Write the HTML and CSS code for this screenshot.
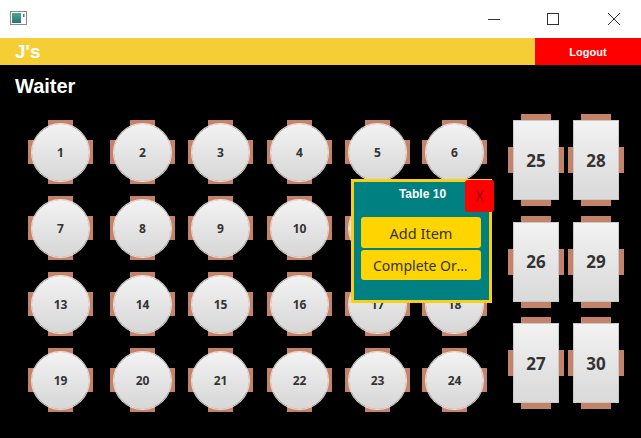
FILE: index.html
```html
<!DOCTYPE html>
<html lang="en">
<head>
<meta charset="utf-8">
<title>J's - Waiter</title>
<link rel="stylesheet" href="styles.css">
</head>
<body>
<div class="window">
  <div class="titlebar">
    <svg class="app-icon" width="17" height="14" viewBox="0 0 17 14">
      <defs>
        <linearGradient id="ig" x1="0" y1="0" x2="0" y2="1">
          <stop offset="0" stop-color="#4aa88f"/>
          <stop offset="1" stop-color="#2c6f7a"/>
        </linearGradient>
      </defs>
      <rect x="0.5" y="0.5" width="16" height="13" fill="#fff" stroke="#8a8a8a"/>
      <rect x="2" y="2" width="9" height="10" fill="url(#ig)"/>
      <rect x="13" y="3" width="1.5" height="3" fill="#6a6a6a"/>
    </svg>
    <div class="controls">
      <span class="ctl"><svg width="14" height="14" viewBox="0 0 14 14"><path d="M1 7.5h12" stroke="#333" stroke-width="1"/></svg></span>
      <span class="ctl"><svg width="14" height="14" viewBox="0 0 14 14"><rect x="1.5" y="1.5" width="11" height="11" fill="none" stroke="#333" stroke-width="1"/></svg></span>
      <span class="ctl"><svg width="14" height="14" viewBox="0 0 14 14"><path d="M1 1l12 12M13 1L1 13" stroke="#333" stroke-width="1"/></svg></span>
    </div>
  </div>

  <header class="appbar">
    <div class="brand">J's</div>
    <button class="logout">Logout</button>
  </header>

  <main class="floor">
    <h1 class="role">Waiter</h1>
    <div class="layout">
      <div class="round-grid">
        <div class="rtable"><div class="top">1</div></div>
        <div class="rtable"><div class="top">2</div></div>
        <div class="rtable"><div class="top">3</div></div>
        <div class="rtable"><div class="top">4</div></div>
        <div class="rtable"><div class="top">5</div></div>
        <div class="rtable"><div class="top">6</div></div>
        <div class="rtable"><div class="top">7</div></div>
        <div class="rtable"><div class="top">8</div></div>
        <div class="rtable"><div class="top">9</div></div>
        <div class="rtable"><div class="top">10</div></div>
        <div class="rtable"><div class="top">11</div></div>
        <div class="rtable"><div class="top">12</div></div>
        <div class="rtable"><div class="top">13</div></div>
        <div class="rtable"><div class="top">14</div></div>
        <div class="rtable"><div class="top">15</div></div>
        <div class="rtable"><div class="top">16</div></div>
        <div class="rtable"><div class="top">17</div></div>
        <div class="rtable"><div class="top">18</div></div>
        <div class="rtable"><div class="top">19</div></div>
        <div class="rtable"><div class="top">20</div></div>
        <div class="rtable"><div class="top">21</div></div>
        <div class="rtable"><div class="top">22</div></div>
        <div class="rtable"><div class="top">23</div></div>
        <div class="rtable"><div class="top">24</div></div>
      </div>
      <div class="rect-grid">
        <div class="qtable"><div class="top">25</div></div>
        <div class="qtable"><div class="top">28</div></div>
        <div class="qtable"><div class="top">26</div></div>
        <div class="qtable"><div class="top">29</div></div>
        <div class="qtable"><div class="top">27</div></div>
        <div class="qtable"><div class="top">30</div></div>
      </div>
    </div>

    <div class="popup">
      <div class="popup-title">Table 10</div>
      <button class="close">X</button>
      <div class="actions">
        <button class="action">Add Item</button>
        <button class="action action-long">Complete Order</button>
      </div>
    </div>
  </main>
</div>
</body>
</html>
```

FILE: styles.css
```css
* { box-sizing: border-box; }

html, body {
  margin: 0;
  padding: 0;
  background: #000;
}

.window {
  width: 641px;
  height: 438px;
  overflow: hidden;
  background: #000;
  font-family: "Liberation Sans", Arial, sans-serif;
}

.titlebar {
  height: 38px;
  background: #fff;
  display: flex;
  align-items: center;
  padding-left: 10px;
}

.app-icon {
  display: block;
  margin-top: -2px;
}

.controls {
  margin-left: auto;
  display: flex;
  height: 100%;
}

.ctl {
  width: 57px;
  display: flex;
  align-items: center;
  justify-content: center;
  margin-top: -1px;
}

.controls .ctl:first-child { width: 46px; margin-right: 7px; }
.controls .ctl:last-child { width: 60px; padding-left: 6px; }

.appbar {
  height: 27px;
  background: #f5ce35;
  display: flex;
  align-items: stretch;
}

.brand {
  color: #fff;
  font-weight: bold;
  font-size: 19px;
  line-height: 27px;
  padding-left: 15px;
}

.logout {
  margin-left: auto;
  width: 106px;
  border: 0;
  background: #ff0000;
  color: #fff;
  font-family: "Liberation Sans", Arial, sans-serif;
  font-weight: bold;
  font-size: 11px;
  padding: 0;
}

.floor {
  position: relative;
  padding-top: 9px;
}

.role {
  margin: 0 0 0 15px;
  color: #fff;
  font-size: 20px;
  line-height: 24px;
  font-weight: bold;
}

.layout {
  display: flex;
  align-items: flex-start;
  padding-left: 28px;
}

.round-grid {
  margin-top: 22px;
  display: grid;
  grid-template-columns: 82px 78px 79px 78px 77px 65px;
  grid-auto-rows: 64px;
  row-gap: 12px;
}

.rtable {
  position: relative;
  width: 65px;
  height: 64px;
  display: flex;
  align-items: center;
  justify-content: center;
}

.rtable::before,
.rtable::after,
.qtable::before,
.qtable::after {
  content: "";
  position: absolute;
  background: #c3836a;
}

.rtable::before { left: 20px; top: 0; width: 25px; height: 64px; }
.rtable::after { left: 0; top: 20px; width: 65px; height: 24px; }

.rtable .top {
  position: relative;
  z-index: 1;
  width: 57px;
  height: 57px;
  border-radius: 50%;
  background: linear-gradient(#f3f3f3, #d6d6d6);
  box-shadow: 0 0 0 1px #ecdcd4;
  display: flex;
  align-items: center;
  justify-content: center;
  color: #333;
  font-family: "Noto Sans", "Open Sans", sans-serif;
  font-weight: bold;
  font-size: 12px;
}

.rect-grid {
  margin-top: 16px;
  margin-left: 21px;
  display: grid;
  grid-template-columns: 56px 56px;
  column-gap: 4px;
  grid-auto-rows: 92px;
  row-gap: 9.5px;
}

.qtable {
  position: relative;
  width: 56px;
  height: 92px;
  display: flex;
  align-items: center;
  justify-content: center;
}

.qtable::before { left: 13px; top: 0; width: 30px; height: 92px; }
.qtable::after { left: 0; top: 33px; width: 56px; height: 26px; }

.qtable .top {
  position: relative;
  z-index: 1;
  width: 46px;
  height: 80px;
  background: linear-gradient(#f2f2f2, #d9d9d9);
  border: 1px solid #c9c9c9;
  display: flex;
  align-items: center;
  justify-content: center;
  color: #333;
  font-family: "Noto Sans", "Open Sans", sans-serif;
  font-weight: bold;
  font-size: 17px;
}

.popup {
  position: absolute;
  left: 351px;
  top: 114px;
  width: 141px;
  height: 124px;
  background: #008080;
  border: 3px solid #f7cf14;
  z-index: 5;
}

.popup-title {
  color: #fff;
  font-family: "Liberation Sans", Arial, sans-serif;
  font-weight: bold;
  font-size: 12px;
  line-height: 14px;
  text-align: center;
  margin-top: 5px;
  padding-left: 2px;
}

.close {
  position: absolute;
  left: 111px;
  top: -2px;
  width: 29px;
  height: 32px;
  border: 0;
  border-radius: 3px;
  background: #ff0000;
  color: #9b1010;
  font-family: "Noto Sans", "Open Sans", sans-serif;
  font-size: 16px;
  padding: 0;
}

.actions {
  margin: 16px 8px 0 7px;
  display: flex;
  flex-direction: column;
  gap: 2px;
}

.action {
  height: 31px;
  border: 0;
  border-radius: 3px;
  background: #ffd500;
  color: #333;
  font-family: "Noto Sans", "Open Sans", sans-serif;
  font-size: 14.5px;
  padding: 0 10px;
  white-space: nowrap;
  overflow: hidden;
  text-overflow: ellipsis;
}

.action-long {
  height: 30px;
  font-size: 14px;
  padding: 0 6px 0 12px;
}
```
